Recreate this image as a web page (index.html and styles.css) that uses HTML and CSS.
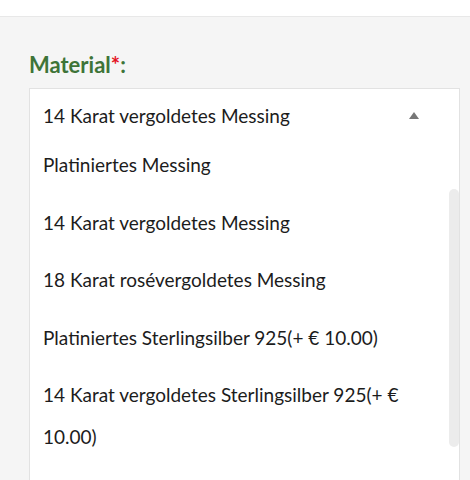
FILE: index.html
```html
<!DOCTYPE html>
<html lang="de">
<head>
<meta charset="utf-8">
<link rel="stylesheet" href="styles.css">
</head>
<body>
<div class="topbar"></div>
<div class="field">
  <div class="label">Material<span class="req">*</span>:</div>
  <div class="select">
    <div class="current">
      <span>14 Karat vergoldetes Messing</span>
      <span class="caret"></span>
    </div>
    <ul class="list">
      <li>Platiniertes Messing</li>
      <li>14 Karat vergoldetes Messing</li>
      <li>18 Karat rosévergoldetes Messing</li>
      <li>Platiniertes Sterlingsilber 925(+ € 10.00)</li>
      <li>14 Karat vergoldetes Sterlingsilber 925(+ € 10.00)</li>
    </ul>
    <div class="thumb"></div>
  </div>
</div>
</body>
</html>
```
FILE: styles.css
```css
html, body {
  margin: 0;
  padding: 0;
  height: 100%;
  overflow: hidden;
}
body {
  background: #f5f5f5;
  font-family: Lato, "Noto Sans", sans-serif;
  color: #1c1c1c;
}
.topbar {
  height: 16px;
  background: #fff;
  border-bottom: 1px solid #e8e8e8;
}
.field {
  padding: 35px 10px 0 29px;
}
.label {
  font-weight: 700;
  font-size: 22px;
  line-height: 26px;
  color: #3e7438;
  margin-bottom: 10px;
}
.req {
  color: #e4131f;
}
.select {
  position: relative;
  background: #fff;
  border: 1px solid #e2e2e2;
  border-bottom: none;
  height: 391px;
  overflow: hidden;
  font-size: 19px;
}
.current {
  display: flex;
  justify-content: space-between;
  align-items: center;
  padding: 11px 40px 0 13px;
  height: 30px;
}
.caret {
  width: 0;
  height: 0;
  border-left: 5px solid transparent;
  border-right: 5px solid transparent;
  border-bottom: 7px solid #777;
}
.list {
  list-style: none;
  margin: 0;
  padding: 6px 40px 0 13px;
}
.list li {
  padding: 8px 0;
  line-height: 41.5px;
}
.thumb {
  position: absolute;
  left: 419px;
  top: 100px;
  width: 10px;
  height: 258px;
  border-radius: 5px;
  background: #ececec;
}
```
